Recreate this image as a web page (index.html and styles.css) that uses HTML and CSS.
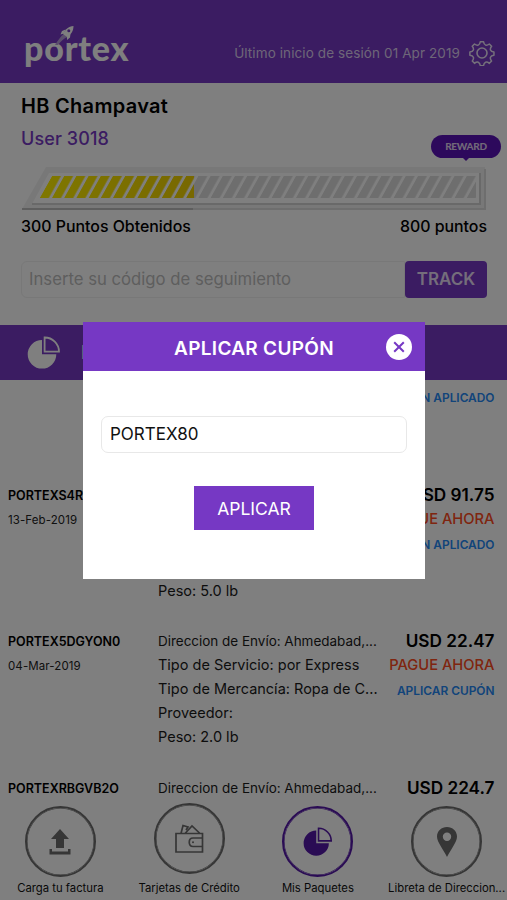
FILE: index.html
```html
<!DOCTYPE html>
<html lang="es">
<head>
<meta charset="utf-8">
<title>Portex</title>
<link rel="stylesheet" href="styles.css">
</head>
<body>
<div class="app">
  <header class="topbar">
    <div class="logo">portex
      <svg class="rocket" width="22" height="24" viewBox="0 0 22 24">
        <path d="M0 20 C3 15 6 11 9 9 L13 12 C9 13 6 16 3 20Z" fill="#b79ddb"/>
        <path d="M18.500 1 C13.500 1.500 10 4.500 8 9 L12 12 C16 9.500 18.500 6 18.500 1Z" fill="#fff"/>
        <path d="M10.500 4.500 L7 6 L5.500 9.500 L9 8.500Z M15.500 8.500 L15 12.500 L12 15 L12 11Z" fill="#fff"/>
        <circle cx="13.800" cy="5.800" r="1.500" fill="#7638c4"/>
      </svg>
    </div>
    <p class="session">Último inicio de sesión 01 Apr 2019</p>
    <svg class="gear" width="26" height="26" viewBox="0 0 26 26" fill="none" stroke="#fff" stroke-width="1.600" stroke-linejoin="round">
      <path d="M11.300 1.200h3.400c.3 2.200.9 3.200 2.200 3.700 1.300.5 2.400.1 4-1.200l2.400 2.400c-1.300 1.700-1.700 2.700-1.200 4 .5 1.300 1.500 1.900 3.700 2.200v3.400c-2.200.3-3.200.9-3.700 2.200-.5 1.300-.1 2.300 1.200 4l-2.400 2.400c-1.600-1.300-2.700-1.700-4-1.200-1.300.5-1.900 1.500-2.200 3.700h-3.400c-.3-2.200-.9-3.200-2.200-3.700-1.300-.5-2.400-.1-4 1.200l-2.400-2.400c1.300-1.700 1.700-2.700 1.200-4-.5-1.300-1.500-1.900-3.700-2.200v-3.400c2.200-.3 3.200-.9 3.700-2.200.5-1.300.1-2.300-1.200-4l2.400-2.400c1.600 1.300 2.700 1.700 4 1.200 1.300-.5 1.900-1.500 2.200-3.700z" transform="translate(.7 .5) scale(.94)"/>
      <circle cx="13" cy="13" r="5"/>
    </svg>
  </header>

  <section class="profile">
    <h1 class="name">HB Champavat</h1>
    <p class="user">User 3018</p>
    <div class="reward"><span>REWARD</span></div>
    <svg class="meter" width="470" height="48" viewBox="0 0 470 48">
      <defs>
        <linearGradient id="gold" x1="0" x2="1"><stop offset="0" stop-color="#fff000"/><stop offset="1" stop-color="#f0d000"/></linearGradient>
        <pattern id="hatch" width="12.200" height="22" patternUnits="userSpaceOnUse" patternTransform="translate(31 13) skewX(-29)">
          <rect x="0" y="0" width="9" height="22" fill="#fff"/>
        </pattern>
        <mask id="bars"><path d="M31 13H455V35H18.500Z" fill="url(#hatch)"/></mask>
      </defs>
      <path d="M25 4H464V46H1Z" fill="#f1f1f1"/>
      <path d="M28 10H459V41H11Z" fill="#fff"/>
      <path d="M11 41H459V10" fill="none" stroke="#d2d2d2" stroke-width="2"/>
      <path d="M1 46H464V6" fill="none" stroke="#dcdcdc" stroke-width="2"/>
      <path d="M1 46H172" fill="none" stroke="#bdbdbd" stroke-width="2"/>
      <g mask="url(#bars)">
        <rect x="0" y="13" width="457" height="22" fill="#dcdcdc"/>
        <rect x="18" y="13" width="155" height="22" fill="url(#gold)"/>
      </g>
    </svg>
    <div class="points"><span class="earned">300 Puntos Obtenidos</span><span class="goal">800 puntos</span></div>
    <div class="track">
      <div class="track-input">Inserte su código de seguimiento</div>
      <div class="track-button">TRACK</div>
    </div>
  </section>

  <div class="section-bar">
    <svg width="34" height="34" viewBox="0 0 34 34">
      <path d="M15 4 A14.300 14.300 0 1 0 29.300 18.300 H15Z" fill="#fff"/>
      <path d="M17.600 1.500 V15.700 H32 A14.300 14.300 0 0 0 17.600 1.500Z" fill="none" stroke="#fff" stroke-width="1.800"/>
    </svg>
    <span class="section-title">M</span>
  </div>

  <main class="list">
    <article class="row">
      <div class="ids"></div>
      <div class="details"></div>
      <div class="pay coupon-only"><span class="coupon">CUPÓN APLICADO</span></div>
    </article>
    <article class="row">
      <div class="ids"><b class="code">PORTEXS4R</b><span class="date">13-Feb-2019</span></div>
      <div class="details last-only"><span>Peso: 5.0 lb</span></div>
      <div class="pay"><b class="price">USD 91.75</b><span class="due">PAGUE AHORA</span><span class="coupon">CUPÓN APLICADO</span></div>
    </article>
    <article class="row">
      <div class="ids"><b class="code">PORTEX5DGYON0</b><span class="date">04-Mar-2019</span></div>
      <div class="details">
        <span class="address">Direccion de Envío: Ahmedabad,...</span>
        <span>Tipo de Servicio: por Express</span>
        <span>Tipo de Mercancía: Ropa de C...</span>
        <span>Proveedor:</span>
        <span>Peso: 2.0 lb</span>
      </div>
      <div class="pay"><b class="price">USD 22.47</b><span class="due">PAGUE AHORA</span><span class="coupon">APLICAR CUPÓN</span></div>
    </article>
    <article class="row">
      <div class="ids"><b class="code">PORTEXRBGVB2O</b></div>
      <div class="details"><span class="address">Direccion de Envío: Ahmedabad,...</span></div>
      <div class="pay"><b class="price">USD 224.7</b></div>
    </article>
  </main>

  <nav class="tabs">
    <div class="tab">
      <div class="ring"><svg width="24" height="28" viewBox="0 0 24 28" fill="#6c6c6c"><path d="M12 1 L21 11H16V20H8V11H3Z"/><path d="M1.500 21V26.500H22.500V21H20V23.500H4V21Z"/></svg></div>
      <span>Carga tu factura</span>
    </div>
    <div class="tab raised">
      <div class="ring"><svg width="30" height="30" viewBox="0 0 30 30" fill="none" stroke="#6c6c6c" stroke-width="1.700"><path d="M2 9.500H28.500V28H2Z M7 9.500L9 1.500L14 3L12 6 M11 9.500L18 2L26 9.500 M28.500 14H19C14 14 14 22.500 19 22.500H28.500"/><circle cx="19" cy="18.300" r="1" fill="#6c6c6c" stroke="none"/></svg></div>
      <span>Tarjetas de Crédito</span>
    </div>
    <div class="tab active">
      <div class="ring"><svg width="30" height="30" viewBox="0 0 34 34"><path d="M15 4 A14.300 14.300 0 1 0 29.300 18.300 H15Z" fill="#5518a8"/><path d="M17.600 1.500 V15.700 H32 A14.300 14.300 0 0 0 17.600 1.500Z" fill="none" stroke="#5518a8" stroke-width="1.800"/></svg></div>
      <span>Mis Paquetes</span>
    </div>
    <div class="tab">
      <div class="ring"><svg width="22" height="32" viewBox="0 0 22 32"><path fill="#6c6c6c" fill-rule="evenodd" d="M11 1C5.500 1 1 5 1 10.500C1 16 7 23 11 31C15 23 21 16 21 10.500C21 5 16.500 1 11 1ZM11 6.500A4.200 4.200 0 1 1 11 14.900A4.200 4.200 0 1 1 11 6.500Z"/></svg></div>
      <span>Libreta de Direccion...</span>
    </div>
  </nav>
</div>

<div class="overlay">
  <div class="modal">
    <div class="modal-head">
      <span class="modal-title">APLICAR CUPÓN</span>
      <svg class="close" width="26" height="26" viewBox="0 0 26 26"><circle cx="13" cy="13" r="13" fill="#fff"/><path d="M8.200 8.200L17.800 17.800M17.800 8.200L8.200 17.800" stroke="#7638c4" stroke-width="2"/></svg>
    </div>
    <div class="modal-body">
      <div class="coupon-input">PORTEX80</div>
      <div class="apply">APLICAR</div>
    </div>
  </div>
</div>
</body>
</html>
```
FILE: styles.css
```css
* { box-sizing: border-box; margin: 0; padding: 0; }
body { width: 507px; height: 900px; overflow: hidden; font-family: Inter, "Liberation Sans", sans-serif; background: #fff; color: #111; position: relative; }
span, b, p, h1, .logo, .apply, .coupon-input, .track-input, .track-button { white-space: nowrap; }
.app { width: 507px; height: 900px; display: flex; flex-direction: column; overflow: hidden; position: relative; }

.topbar { height: 82.500px; background: #7638c4; flex: none; display: flex; align-items: flex-start; padding: 0 12px 0 24px; color: #fff; }
.logo { position: relative; margin-top: 28px; font: 900 34px/40px Lato, sans-serif; letter-spacing: 0.8px; width: 110px; }
.rocket { position: absolute; left: 31px; top: -3px; }
.session { margin: 43px 0 0 auto; font-size: 13.500px; line-height: 20px; letter-spacing: 0.1px; color: #dcccf0; }
.gear { margin: 40px 0 0 9px; opacity: .85; }

.profile { height: 242.500px; flex: none; padding: 10.500px 20px 0 21px; position: relative; }
.name { font-size: 20px; line-height: 26px; font-weight: 600; letter-spacing: 0.3px; color: #000; }
.user { font-size: 18px; line-height: 24px; margin-top: 8px; font-weight: 500; letter-spacing: 0.1px; color: #7638c4; }
.reward { position: absolute; left: 431px; top: 52.500px; width: 70px; height: 23px; border-radius: 12px; background: #5a12b8; color: #e0d0f0; font: 900 10px/23px Lato, sans-serif; letter-spacing: -0.3px; text-align: center; }
.reward::after { content: ""; position: absolute; left: 31px; top: 22px; border: 4px solid transparent; border-top-color: #5a12b8; border-bottom: 0; }
.meter { display: block; margin-top: 12px; }
.points { display: flex; justify-content: space-between; margin-top: 5px; font-size: 15.900px; line-height: 22px; font-weight: 500; color: #000; }
.track { display: flex; height: 37px; margin-top: 23px; }
.track-input { flex: 1; border: 1px solid #f0f0f0; border-radius: 6px 0 0 6px; padding-left: 7px; font-size: 16.700px; line-height: 34px; color: #bdbdbd; }
.track-button { width: 82px; background: #7638c4; border-radius: 4px; color: #e8dcf6; font-size: 17px; font-weight: 600; line-height: 37px; text-align: center; }

.section-bar { height: 55px; flex: none; background: #7638c4; display: flex; align-items: center; padding-left: 27px; color: #fff; }
.section-title { font-size: 19px; font-weight: 600; margin-left: 20px; }

.list { flex: 1; overflow: hidden; }
.row { height: 146.500px; display: grid; grid-template-columns: 150px 219px 1fr; padding: 0 12.500px 0 8px; }
.row:first-child { margin-top: -44px; }
.ids, .details, .pay { display: flex; flex-direction: column; align-items: flex-start; line-height: 24px; }
.code { font-size: 12.500px; line-height: 25px; font-weight: 600; color: #000; }
.date { font-size: 11.500px; letter-spacing: 0.1px; color: #222; }
.details { font-size: 14.500px; color: #1a1a1a; }
.last-only { padding-top: 96px; }
.address { font-size: 13.500px; letter-spacing: -0.02px; }
.pay { align-items: flex-end; }
.coupon-only { padding-top: 48px; }
.price { font-size: 17.200px; font-weight: 600; color: #000; }
.due { font-size: 14.700px; font-weight: 500; color: #ff4a20; }
.coupon { font-size: 11.900px; font-weight: 600; color: #2488f5; line-height: 27px; }

.tabs { position: absolute; left: -4px; bottom: 0; width: 515px; height: 94px; display: grid; grid-template-columns: repeat(4, 1fr); }
.tab { display: flex; flex-direction: column; align-items: center; font-size: 11.300px; color: #111; }
.ring { width: 71px; height: 71px; border: 2px solid #6c6c6c; box-shadow: inset 0 0 0 0.500px #6c6c6c; border-radius: 50%; display: flex; align-items: center; justify-content: center; }
.active .ring { border-color: #5518a8; box-shadow: inset 0 0 0 0.500px #5518a8; }
.tab span { line-height: 16px; margin-top: 3px; }
.raised .ring { margin-top: -3px; }
.raised span { margin-top: 6px; }

.overlay { position: absolute; inset: 0; background: rgba(0, 0, 0, .5); padding: 322px 82px 0 83px; }
.modal { height: 257px; background: #fff; }
.modal-head { height: 49px; background: #7638c4; color: #fff; display: flex; align-items: center; justify-content: center; position: relative; padding-top: 3px; }
.modal-title { font-size: 19px; font-weight: 600; letter-spacing: 0.3px; }
.close { position: absolute; right: 13px; top: 12px; }
.modal-body { padding: 45px 18px 0; display: flex; flex-direction: column; align-items: center; }
.coupon-input { width: 306px; height: 37px; border: 1px solid #e8e8e8; border-radius: 7px; padding-left: 8px; font-size: 17px; line-height: 35px; }
.apply { width: 120px; height: 44px; margin-top: 33px; background: #7638c4; color: #fff; font-size: 17.500px; line-height: 45px; text-align: center; }
```
